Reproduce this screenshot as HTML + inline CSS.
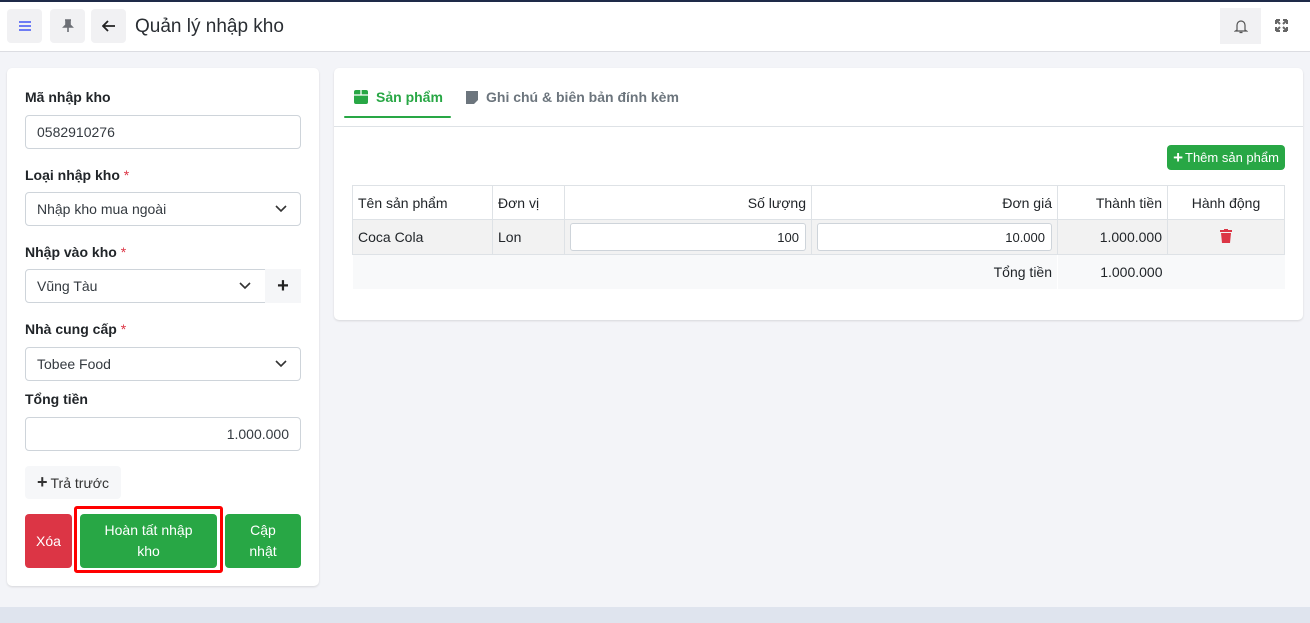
<!DOCTYPE html>
<html><head><meta charset="utf-8"><style>
*{box-sizing:border-box;margin:0;padding:0}
body{width:1310px;height:623px;overflow:hidden;background:#f3f4f8;font-family:"Liberation Sans",sans-serif;font-size:14px;color:#212529;position:relative}
.a{position:absolute}
.hdr{left:0;top:0;width:1310px;height:52px;background:#fff;border-bottom:1px solid #dcdde2;border-top:2px solid #1e2a48}
.ib{background:#f1f1f3;border-radius:4px;width:35px;height:34px;top:9px;display:flex;align-items:center;justify-content:center}
.card{background:#fff;border-radius:5px;box-shadow:0 1px 2px rgba(0,0,0,.12)}
.lbl{left:25px;font-weight:bold;font-size:14px;color:#212529}
.lbl i{color:#dc3545;font-style:normal;font-weight:normal}
.inp{left:25px;width:276px;height:34px;border:1px solid #ced4da;border-radius:4px;background:#fff;padding:0 11px;display:flex;align-items:center;font-size:14px;color:#343a40}
.chev{position:absolute;right:13px;top:11px}
.btn{color:#fff;border-radius:4px;display:flex;align-items:center;justify-content:center;text-align:center;font-size:14px;line-height:21px}
table{border-collapse:collapse;position:absolute;left:352px;top:185px;width:933px;font-size:14px}
td{border:1px solid #dee2e6;padding:0 5px;height:34px}
</style></head><body>
<div class="a hdr"></div>
<div class="a ib" style="left:7px"><svg width="14" height="12"><path d="M1 2h12M1 6h12M1 10h12" stroke="#5b6cf5" stroke-width="1.8"/></svg></div>
<div class="a ib" style="left:50px"><svg width="12" height="14"><path d="M3 1h6M4 1v5l-2 2h8l-2-2V1M6 8v5" stroke="#6c6f75" stroke-width="1.6" fill="#6c6f75"/></svg></div>
<div class="a ib" style="left:91px"><svg width="14" height="12"><path d="M13 6H2M6 1L1 6l5 5" stroke="#222" stroke-width="1.8" fill="none"/></svg></div>
<div class="a" style="left:135px;top:16px;font-size:19px;color:#2a2e33">Quản lý nhập kho</div>
<div class="a" style="left:1220px;top:8px;width:41px;height:36px;background:#f1f1f3;display:flex;align-items:center;justify-content:center"><svg width="14" height="15"><path d="M3 11V6a4 4 0 018 0v5l1.5 1h-11zM5.5 13.5h3" stroke="#555" stroke-width="1.2" fill="none"/></svg></div>
<div class="a" style="left:1275px;top:19px"><svg width="13" height="13"><path d="M1 1l4 4M12 1L8 5M1 12l4-4M12 12L8 8M1 1h4M1 1v4M12 1H8M12 1v4M1 12h4M1 12V8M12 12H8M12 12V8" stroke="#666" stroke-width="2" fill="none"/></svg></div>

<div class="a card" style="left:7px;top:68px;width:312px;height:518px"></div>
<div class="a lbl" style="top:89px">Mã nhập kho</div>
<div class="a inp" style="top:115px">0582910276</div>
<div class="a lbl" style="top:167px">Loại nhập kho <i>*</i></div>
<div class="a inp" style="top:192px">Nhập kho mua ngoài<svg class="chev" width="12" height="10"><path d="M1 2l5 5 5-5" stroke="#333" stroke-width="1.6" fill="none"/></svg></div>
<div class="a lbl" style="top:244px">Nhập vào kho <i>*</i></div>
<div class="a inp" style="top:269px;width:241px;border-radius:4px 0 0 4px">Vũng Tàu<svg class="chev" style="right:14px" width="12" height="10"><path d="M1 2l5 5 5-5" stroke="#333" stroke-width="1.6" fill="none"/></svg></div>
<div class="a" style="left:265px;top:269px;width:36px;height:34px;background:#f5f6f8;display:flex;align-items:center;justify-content:center;font-size:20px;font-weight:bold;color:#222">+</div>
<div class="a lbl" style="top:321px">Nhà cung cấp <i>*</i></div>
<div class="a inp" style="top:347px">Tobee Food<svg class="chev" width="12" height="10"><path d="M1 2l5 5 5-5" stroke="#333" stroke-width="1.6" fill="none"/></svg></div>
<div class="a lbl" style="top:391px">Tổng tiền</div>
<div class="a inp" style="top:417px;justify-content:flex-end">1.000.000</div>
<div class="a" style="left:25px;top:466px;width:96px;height:33px;background:#f6f7f9;border-radius:4px;display:flex;align-items:center;justify-content:center;color:#333"><b style="font-size:18px;margin-right:3px">+</b>Trả trước</div>
<div class="a btn" style="left:25px;top:514px;width:47px;height:54px;background:#dc3545">Xóa</div>
<div class="a" style="left:74px;top:506px;width:149px;height:67px;border:3px solid #f00;border-radius:3px"></div>
<div class="a btn" style="left:80px;top:514px;width:137px;height:54px;background:#28a745">Hoàn tất nhập<br>kho</div>
<div class="a btn" style="left:225px;top:514px;width:76px;height:54px;background:#28a745">Cập<br>nhật</div>

<div class="a card" style="left:334px;top:68px;width:969px;height:252px"></div>
<div class="a" style="left:334px;top:126px;width:969px;border-top:1px solid #dee2e6"></div>
<div class="a" style="left:344px;top:116px;width:107px;height:2px;background:#28a745;border-radius:1px"></div>
<div class="a" style="left:354px;top:89px;font-weight:bold;color:#28a745;display:flex;align-items:center"><svg width="14" height="14" style="margin-right:8px"><rect x="0" y="0" width="14" height="14" rx="2" fill="#28a745"/><path d="M0 5h14M7 0v5" stroke="#fff" stroke-width="1.3"/></svg>Sản phẩm</div>
<div class="a" style="left:466px;top:89px;font-weight:bold;color:#6c757d;display:flex;align-items:center"><svg width="12" height="13" style="margin-right:8px"><path d="M0 0h12v9l-4 4H0z" fill="#6c757d"/></svg>Ghi chú &amp; biên bản đính kèm</div>
<div class="a btn" style="left:1167px;top:145px;width:118px;height:25px;background:#28a745;font-size:13px"><b style="font-size:17px;margin-right:2px">+</b>Thêm sản phẩm</div>
<table>
<tr style="background:#fff"><td style="width:140px">Tên sản phẩm</td><td style="width:72px">Đơn vị</td><td style="width:247px;text-align:right">Số lượng</td><td style="width:246px;text-align:right">Đơn giá</td><td style="width:110px;text-align:right">Thành tiền</td><td style="text-align:center">Hành động</td></tr>
<tr style="background:#f2f2f2;height:35px"><td>Coca Cola</td><td>Lon</td><td><div style="border:1px solid #ced4da;border-radius:3px;background:#fff;height:28px;text-align:right;padding:6px 6px;font-size:13px">100</div></td><td><div style="border:1px solid #ced4da;border-radius:3px;background:#fff;height:28px;text-align:right;padding:6px 6px;font-size:13px">10.000</div></td><td style="text-align:right">1.000.000</td><td style="text-align:center"><svg width="12" height="14"><path d="M0 2h12M4 1h4" stroke="#dc3545" stroke-width="2"/><path d="M1 4h10l-1 10H2z" fill="#dc3545"/></svg></td></tr>
<tr style="background:#f8f9fa"><td style="border:none;height:32px"></td><td style="border:none"></td><td style="border:none"></td><td style="text-align:right;border:none;border-right:1px solid #fff">Tổng tiền</td><td style="text-align:right;border:none">1.000.000</td><td style="border:none"></td></tr>
</table>
<div class="a" style="left:0;top:607px;width:1310px;height:16px;background:#dfe4ee"></div>
</body></html>
